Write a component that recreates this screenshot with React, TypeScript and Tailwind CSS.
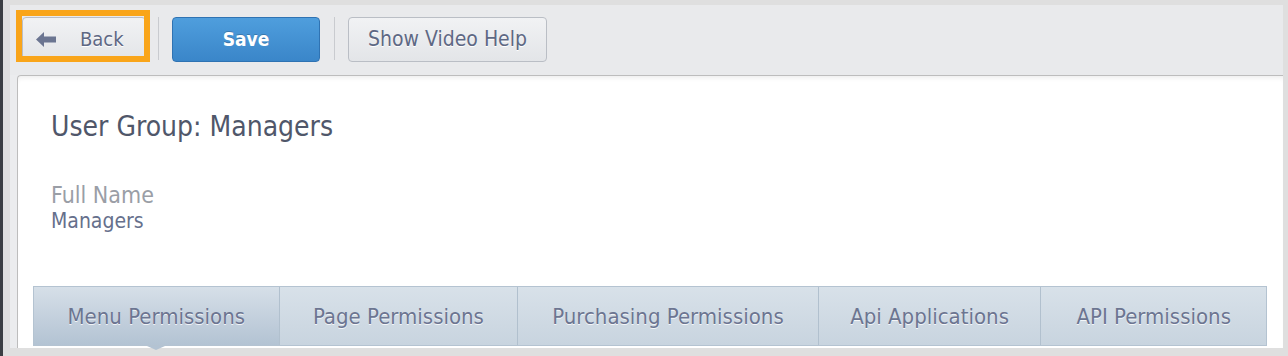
import React from "react";

const font = "font-['DejaVu_Sans_Condensed','DejaVu_Sans',sans-serif] [font-stretch:condensed]";

function BackArrow() {
  return (
    <svg width="20" height="15" viewBox="0 0 20 15" className="block">
      <polygon points="0,7.5 8,0 8,4.5 20,4.5 20,10.5 8,10.5 8,15" fill="#6b7591" />
    </svg>
  );
}

const tabs = [
  { label: "Menu Permissions", w: "w-[245px]", active: true },
  { label: "Page Permissions", w: "w-[239px]", active: false },
  { label: "Purchasing Permissions", w: "w-[301px]", active: false },
  { label: "Api Applications", w: "w-[223px]", active: false },
  { label: "API Permissions", w: "w-[226px]", active: false },
];

export default function App() {
  return (
    <div className={`w-[1288px] h-[356px] bg-[#dfdfdf] flex overflow-hidden ${font}`}>
      <div className="w-[3px] shrink-0 self-stretch bg-[#3b3e43]" />
      <div className="flex-1 min-w-0 pl-[7px] pr-[5px] pt-[5px] pb-[8px] flex flex-col">
        <div className="flex-1 flex flex-col bg-[#ebecee]">
          {/* Toolbar */}
          <div className="relative h-[70px] flex items-start pt-[12px] pl-[12px] bg-[#e9eaec]">
            <button className="w-[124px] h-[44px] rounded-[4px] border border-[#babec5] bg-gradient-to-b from-[#f1f2f4] to-[#e3e5e8] flex items-center pl-[13px] text-[20px] text-[#5e6884] [text-shadow:0_1px_0_#fff]">
              <BackArrow />
              <span className="ml-[24px]">Back</span>
            </button>
            <div className="w-px h-[43px] bg-[#c9cbcf] ml-[12px] mr-[13px]" />
            <button className="w-[148px] h-[45px] rounded-[4px] border border-[#2f73b3] bg-gradient-to-b from-[#4f9edd] to-[#3a86c9] text-white font-bold text-[19px] flex items-center justify-center [text-shadow:0_-1px_0_rgba(0,0,0,0.2)]">
              Save
            </button>
            <div className="w-px h-[43px] bg-[#c9cbcf] ml-[14px] mr-[13px]" />
            <button className="w-[199px] h-[45px] rounded-[4px] border border-[#babec5] bg-gradient-to-b from-[#f1f2f4] to-[#e3e5e8] text-[21px] text-[#5e6884] flex items-center justify-center [text-shadow:0_1px_0_#fff]">
              Show Video Help
            </button>
            <div className="absolute left-[6px] top-[5px] w-[134px] h-[52px] border-[6px] border-[#f9a51a]" />
          </div>
          {/* Panel */}
          <div className="flex-1 ml-[7px] bg-white border-t border-l border-[#bdbdbd] rounded-tl-[4px] shadow-[inset_0_5px_5px_-3px_rgba(0,0,0,0.07)] flex flex-col pl-[15px] pr-[16px]">
            <div className="pl-[18px] pt-[34px]">
              <div className="text-[28px] leading-[34px] text-[#50576a]">User Group: Managers</div>
              <div className="mt-[37px] text-[23px] leading-[28px] text-[#9a9ea6]">Full Name</div>
              <div className="text-[21px] leading-[24px] text-[#66708c]">Managers</div>
            </div>
            <div className="mt-[53px] flex h-[60px] border border-[#b4c3d1]">
              {tabs.map((t, i) => (
                <div
                  key={t.label}
                  className={`relative ${t.w} h-full flex items-center justify-center text-[22px] text-[#6c7591] [text-shadow:0_1px_0_rgba(255,255,255,0.8)] ${
                    i > 0 ? "border-l border-[#b1c0ce]" : ""
                  } ${
                    t.active
                      ? "bg-gradient-to-b from-[#d6dfe8] to-[#b3c3d3]"
                      : "bg-gradient-to-b from-[#d8e1e9] to-[#c8d4df]"
                  }`}
                >
                  {t.label}
                  {t.active && (
                    <div className="absolute left-1/2 -bottom-[5px] -translate-x-1/2 w-0 h-0 border-l-[9px] border-r-[9px] border-t-[4px] border-l-transparent border-r-transparent border-t-[#b3c3d3]" />
                  )}
                </div>
              ))}
            </div>
          </div>
        </div>
      </div>
    </div>
  );
}
